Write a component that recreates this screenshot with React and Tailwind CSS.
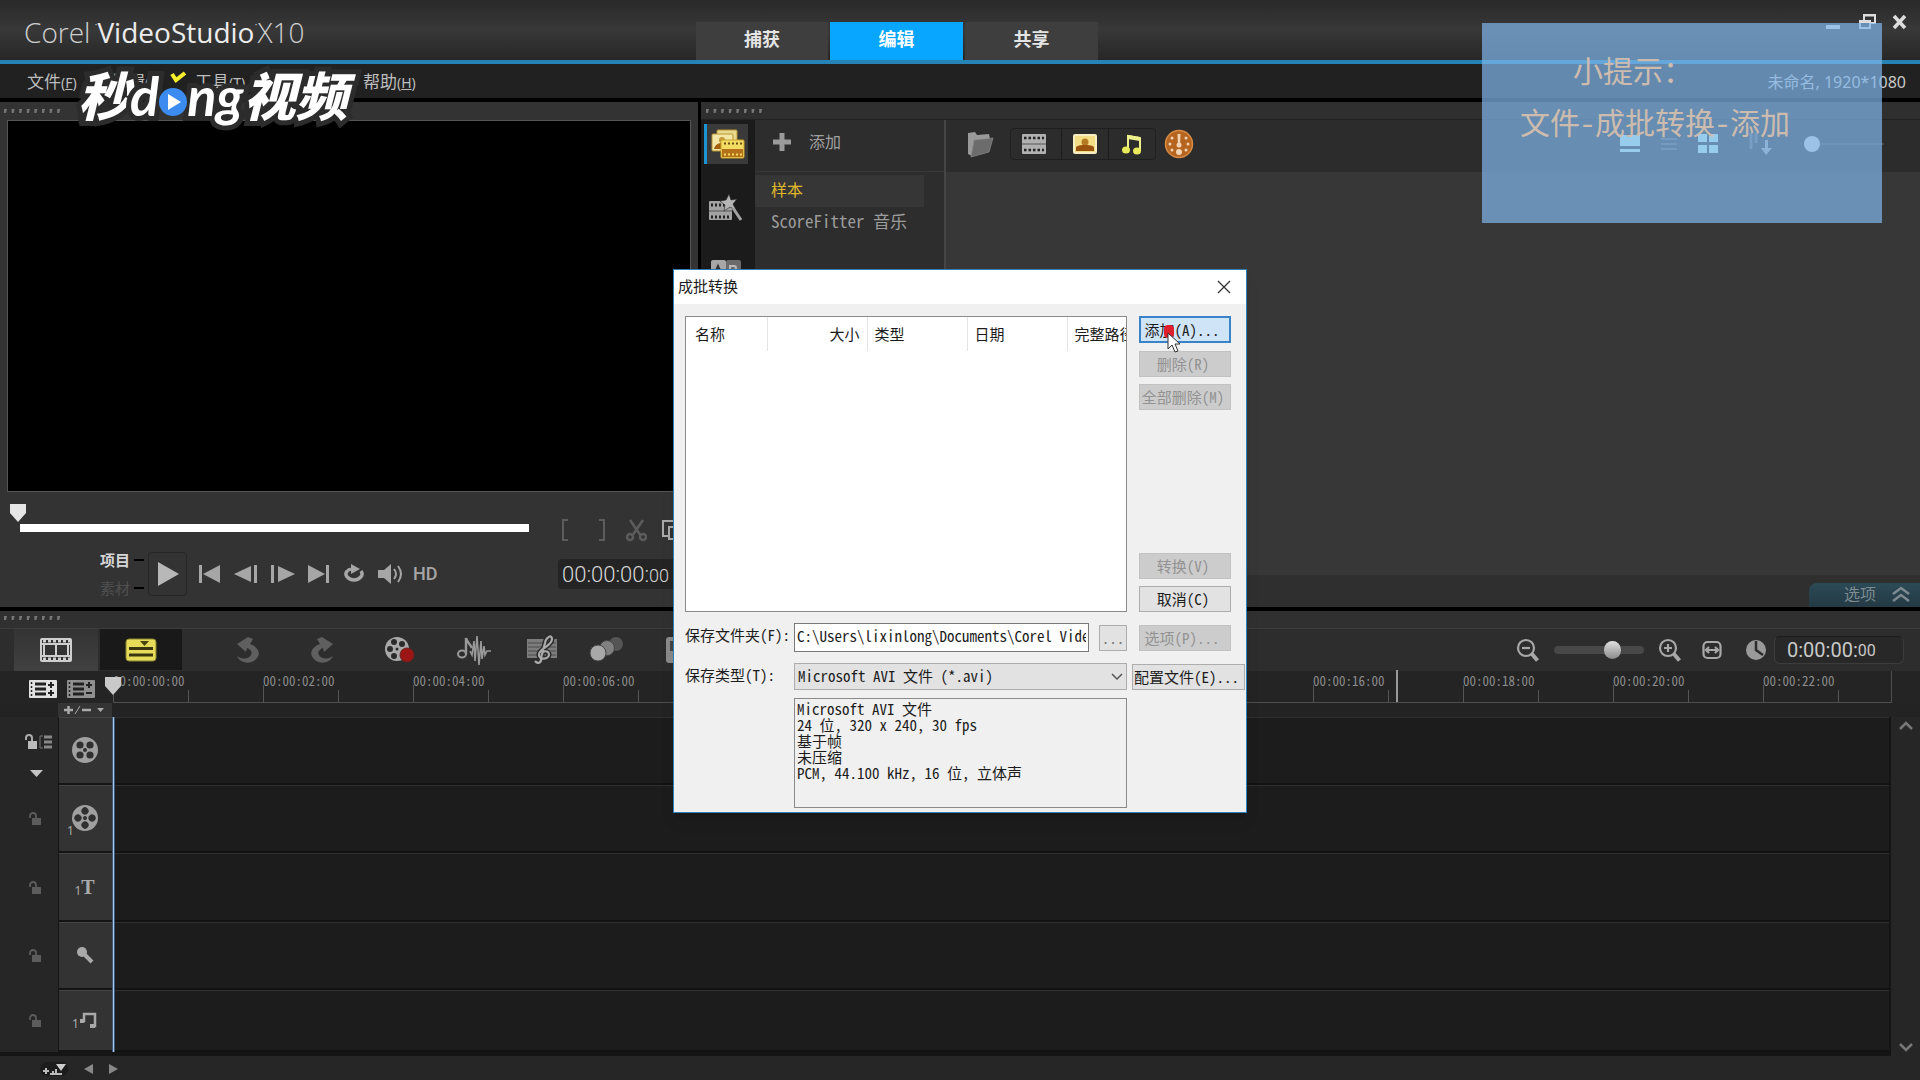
import React from 'react';
import { clsx } from 'clsx';

const SANS = "font-['Noto_Sans','Noto_Sans_CJK_SC',sans-serif]";
const MONO = "font-['Noto_Sans_Mono_CJK_SC','Noto_Sans_CJK_SC',monospace]";

const MENUS = [
  { label: '文件', key: 'F' },
  { label: '编辑', key: 'E' },
  { label: '工具', key: 'T' },
  { label: '设置', key: 'S' },
  { label: '帮助', key: 'H' },
];

const TICKS = ['00', '02', '04', '06', '08', '10', '12', '14', '16', '18', '20', '22'];

/* ---------- icons ---------- */

function Grip({ className }) {
  return (
    <svg className={className} width="60" height="6" viewBox="0 0 60 6">
      {[0, 1, 2, 3, 4, 5, 6, 7].map((i) => (
        <path key={i} d={`M${i * 7.6 + 1} 1h3l-1 4h-2z`} fill="#777" />
      ))}
    </svg>
  );
}

function Reel({ turned }) {
  return (
    <svg width="28" height="28" viewBox="0 0 28 28">
      <circle cx="14" cy="14" r="13" fill="#a0a0a0" />
      <g fill="#303030" transform={turned ? 'rotate(45 14 14)' : undefined}>
        <circle cx="9" cy="9" r="3.6" />
        <circle cx="19" cy="9" r="3.6" />
        <circle cx="9" cy="19" r="3.6" />
        <circle cx="19" cy="19" r="3.6" />
        <circle cx="14" cy="14" r="2" />
      </g>
    </svg>
  );
}

function Lock() {
  return (
    <svg width="14" height="14" viewBox="0 0 14 14">
      <path d="M2 6V4a3 3 0 0 1 6 0v2" fill="none" stroke="#5c5c5c" strokeWidth="1.8" />
      <rect x="4" y="6" width="9" height="7" fill="#5c5c5c" />
    </svg>
  );
}

function MediaIcon() {
  return (
    <svg width="34" height="30" viewBox="0 0 34 30">
      <rect x="6" y="1" width="20" height="15" rx="1" fill="#e9d98c" stroke="#b99432" />
      <rect x="1" y="5" width="21" height="17" rx="1" fill="#f2e7a6" stroke="#b99432" />
      <circle cx="11" cy="11" r="3" fill="#c39736" />
      <path d="M3 20c1-5 5-6 8-6s6 2 8 6z" fill="#a4600f" />
      <rect x="10" y="11" width="23" height="18" rx="1" fill="#f3dc62" stroke="#caa12d" />
      <rect x="11" y="20" width="21" height="8" fill="#b5701a" />
      <path d="M13 14.5h18" stroke="#6c4a10" strokeWidth="2" strokeDasharray="2 2" />
      <path d="M13 25.5h18" stroke="#f3dc62" strokeWidth="2" strokeDasharray="2 2" />
    </svg>
  );
}

function InstantIcon() {
  return (
    <svg width="36" height="30" viewBox="0 0 36 30">
      <rect x="1" y="8" width="23" height="19" rx="1" fill="#a2a2a2" />
      <path d="M3 12h18M3 24h18" stroke="#222" strokeWidth="3" strokeDasharray="2 2" />
      <path d="M1 18h23" stroke="#555" />
      <path d="m21 1 2 6 6-1-4 5 3 6-6-3-6 4 1-6-5-4 6-1z" fill="#b5b5b5" stroke="#222" strokeWidth=".6" />
      <path d="m25 15 8 12" stroke="#a2a2a2" strokeWidth="3" />
    </svg>
  );
}

function TransitionIcon() {
  return (
    <svg width="32" height="26" viewBox="0 0 32 26">
      <rect x="1" y="1" width="15" height="22" rx="2" fill="#a7a7a7" />
      <rect x="16" y="1" width="15" height="22" rx="2" fill="#6b6b6b" />
      <path d="m4 16 4-9 4 9M6 13h4" fill="none" stroke="#333" strokeWidth="2" />
      <path d="M20 16V7h4a2 2 0 0 1 0 4h-4 5a2 2 0 0 1 0 5z" fill="none" stroke="#bbb" strokeWidth="2" />
    </svg>
  );
}

function FolderIcon() {
  return (
    <svg width="28" height="28" viewBox="0 0 28 28">
      <path d="M2 3l7-1 2 3 12-1 1 5-18 17-4-2z" fill="#9a9a9a" />
      <path d="M8 10l19-2-4 14-18 5z" fill="#6c6c6c" stroke="#8c8c8c" strokeWidth=".7" />
    </svg>
  );
}

function FilmIcon() {
  return (
    <svg width="24" height="20" viewBox="0 0 24 20">
      <rect width="24" height="20" rx="1" fill="#b0b0b0" />
      <path d="M2 4h20M2 16h20" stroke="#222" strokeWidth="2.5" strokeDasharray="2.5 2" />
      <path d="M0 10h24" stroke="#555" />
    </svg>
  );
}

function PhotoIcon() {
  return (
    <svg width="24" height="20" viewBox="0 0 24 20">
      <rect x="1" y="1" width="22" height="18" rx="1" fill="#f3dd85" stroke="#f7efc3" strokeWidth="2" />
      <circle cx="12" cy="8" r="3.5" fill="#b67a24" />
      <path d="M3 17v-4c3-2 6-2 9-2s6 0 9 2v4z" fill="#9a520f" />
    </svg>
  );
}

function MusicIcon() {
  return (
    <svg width="22" height="22" viewBox="0 0 22 22">
      <path d="M7 17V3l12 2v13" fill="none" stroke="#eef08a" strokeWidth="2" />
      <path d="M7 4l12 2" stroke="#eef08a" strokeWidth="4" />
      <ellipse cx="5" cy="17" rx="4" ry="3.5" fill="#e9ec5a" />
      <ellipse cx="16" cy="18" rx="4" ry="3.5" fill="#e9ec5a" />
    </svg>
  );
}

function DialIcon() {
  return (
    <svg width="30" height="30" viewBox="0 0 30 30">
      <circle cx="15" cy="15" r="13.5" fill="#b5651f" stroke="#d98a45" strokeWidth="1.5" />
      <g fill="#f2d4b4">
        <circle cx="6" cy="15" r="1.5" />
        <circle cx="24" cy="15" r="1.5" />
        <circle cx="8" cy="9" r="1.5" />
        <circle cx="22" cy="9" r="1.5" />
        <circle cx="8" cy="21" r="1.5" />
        <circle cx="22" cy="21" r="1.5" />
        <path d="M13.5 5h3l-.5 12h-2z" />
        <circle cx="15" cy="16" r="2.5" />
        <circle cx="15" cy="23" r="3" />
      </g>
    </svg>
  );
}

function StoryboardIcon() {
  return (
    <svg width="32" height="24" viewBox="0 0 32 24">
      <rect x="1" y="1" width="30" height="22" rx="1" fill="#333" stroke="#cfcfcf" strokeWidth="2" />
      <path d="M3 3h27M3 21h27" stroke="#cfcfcf" strokeWidth="3" strokeDasharray="3 2" />
      <path d="M2 6h28M2 18h28M16 6v12M4 6v12M28 6v12" stroke="#cfcfcf" strokeWidth="2" />
    </svg>
  );
}

function TimelineIcon() {
  return (
    <svg width="32" height="24" viewBox="0 0 32 24">
      <rect x="1" y="1" width="30" height="22" rx="3" fill="#e6dc5a" stroke="#8c8430" />
      <path d="M15 3h9l-4.5 5z" fill="#4a4410" />
      <path d="M4 10.5h24M4 17h24" stroke="#3a3610" strokeWidth="3" />
    </svg>
  );
}

function Undo({ flip }) {
  return (
    <svg width="26" height="28" viewBox="0 0 26 28" className={clsx(flip && '-scale-x-100')}>
      <path d="M3 8 14 1l5 2-3 5c8 3 11 9 7 14-4 6-16 7-20-2 6 4 12 3 14-1 2-3-1-6-4-7l-1 4z" fill="#5f5f5f" />
    </svg>
  );
}

function RecordIcon() {
  return (
    <svg width="32" height="28" viewBox="0 0 32 28">
      <circle cx="13" cy="13" r="12" fill="#a9a9a9" />
      <g fill="#2b2b2b">
        <circle cx="10" cy="6" r="3" />
        <circle cx="18" cy="8" r="3" />
        <circle cx="6" cy="13" r="3" />
        <circle cx="10" cy="20" r="3" />
        <circle cx="13" cy="13" r="1.5" />
      </g>
      <circle cx="23" cy="19" r="7" fill="#9c1616" stroke="#6a2020" />
    </svg>
  );
}

function WaveIcon() {
  return (
    <svg width="34" height="32" viewBox="0 0 34 32">
      <ellipse cx="5" cy="20" rx="4" ry="3.5" fill="none" stroke="#999" strokeWidth="2" />
      <path d="M9 20V4c1 4 4 6 6 10" fill="none" stroke="#999" strokeWidth="2.4" />
      <path d="M13 17l2 4 2-14 1 20 2-25 2 29 2-24 1 18 2-13 1 9 2-4h4" fill="none" stroke="#999" strokeWidth="1.6" />
    </svg>
  );
}

function ScoreIcon() {
  return (
    <svg width="32" height="32" viewBox="0 0 32 32">
      <rect x="1" y="5" width="30" height="19" fill="#7d7d7d" />
      <path d="M2 9h28M2 13h28M2 17h28M2 21h28" stroke="#4c4c4c" />
      <path
        d="M9 27c3 4 7 1 6-3L19 9c1-6 7-9 7-4 0 7-12 9-13 15-1 6 9 6 10 1 0-5-7-5-7 0"
        fill="none"
        stroke="#2b2b2b"
        strokeWidth="5"
      />
      <path
        d="M9 27c3 4 7 1 6-3L19 9c1-6 7-9 7-4 0 7-12 9-13 15-1 6 9 6 10 1 0-5-7-5-7 0"
        fill="none"
        stroke="#ababab"
        strokeWidth="2.2"
      />
    </svg>
  );
}

function BallsIcon() {
  return (
    <svg width="36" height="28" viewBox="0 0 36 28">
      <circle cx="27" cy="8" r="7" fill="#555" />
      <circle cx="18" cy="12" r="7.5" fill="#808080" stroke="#444" />
      <circle cx="9" cy="17" r="8" fill="#a8a8a8" stroke="#444" />
    </svg>
  );
}

function Zoomer({ plus }) {
  return (
    <svg width="24" height="24" viewBox="0 0 24 24" fill="none" stroke="#a8a8a8">
      <circle cx="10" cy="10" r="8" strokeWidth="2.2" />
      <path d="m15.5 15.5 6 7" strokeWidth="4" />
      <path d={plus ? 'M6 10h8M10 6v8' : 'M6 10h8'} strokeWidth="2.2" />
    </svg>
  );
}

function TrackMode({ color, minus }) {
  return (
    <svg width="28" height="18" viewBox="0 0 28 18">
      <rect width="28" height="18" rx="1" fill={color} />
      <path d="M6 4h11M6 9h11M6 14h11" stroke="#222" strokeWidth="3" />
      <path d="M2.5 2v14" stroke="#222" strokeWidth="1.5" strokeDasharray="2 2" />
      <path d={minus ? 'M19 5h6M22 2v6M19 13h6' : 'M19 5h6M22 2v6M19 13h6M22 10v6'} stroke="#222" strokeWidth="2" />
    </svg>
  );
}

/* ---------- top of the window ---------- */

function Header() {
  return (
    <header className="flex h-16 items-end border-b-4 border-[#2583b5] bg-linear-to-b from-[#292929] via-[#383838] to-[#272727]">
      <h1 className="flex w-[696px] items-start self-center pt-1 pl-6 text-[28px] leading-10 font-light text-[#cfcfcf] font-['Open_Sans',sans-serif]">
        Corel
        <span className="ml-1 text-[8px] leading-6">•</span>
        <span className="font-medium text-[#ececec]">VideoStudio</span>
        <span className="text-[8px] leading-6">•</span>
        X10
      </h1>
      <nav className="flex gap-0.5 text-lg font-bold text-[#e4e4e4]">
        <button className="h-[38px] w-[132px] bg-[#3e3e3e] pb-1">捕获</button>
        <button className="h-[38px] w-[133px] bg-[#08a6ff] pb-1 text-white">编辑</button>
        <button className="h-[38px] w-[133px] bg-[#3e3e3e] pb-1">共享</button>
      </nav>
      <div className="ml-auto flex items-center gap-4 self-start pt-3 pr-3">
        <button aria-label="最小化">
          <svg width="18" height="20" viewBox="0 0 18 20">
            <path d="M2 15h14" stroke="#ddd" strokeWidth="4" />
          </svg>
        </button>
        <button aria-label="还原">
          <svg width="18" height="20" viewBox="0 0 18 20" fill="none" stroke="#ddd" strokeWidth="2">
            <path d="M6 8V3h11v8h-5M6 3.5h11" />
            <path d="M2 9h10v7H2zM2 10h10" />
          </svg>
        </button>
        <button aria-label="关闭">
          <svg width="16" height="20" viewBox="0 0 16 20">
            <path d="m2 4 11 12M13 4 2 16" stroke="#ddd" strokeWidth="3.5" />
          </svg>
        </button>
      </div>
    </header>
  );
}

function MenuBar() {
  return (
    <div className="flex h-[38px] items-center border-b-4 border-black bg-[#212121] pt-0.5 pl-[27px] pr-3.5 text-[17px] text-[#bdbdbd]">
      {MENUS.map((m) => (
        <button key={m.key} className="w-[84px] text-left whitespace-nowrap">
          {m.label}
          <span className="text-sm">
            (<u>{m.key}</u>)
          </span>
        </button>
      ))}
      <span className="ml-auto text-base text-[#c8c8c8]">未命名, 1920*1080</span>
    </div>
  );
}

function Watermark() {
  return (
    <div className="absolute top-[62px] left-[78px] flex items-baseline text-[52px] leading-[64px] font-black text-white italic font-['Noto_Sans_CJK_SC',sans-serif] [paint-order:stroke_fill] [-webkit-text-stroke:10px_#2c2c2c]">
      <span>秒</span>
      <span className="text-[54px] font-bold font-['Lato',sans-serif]">d</span>
      <svg width="28" height="46" viewBox="0 0 28 46" className="relative z-10 overflow-visible">
        <path d="m13 4 4 6 9-7" fill="none" stroke="#f4ee2c" strokeWidth="4" />
        <circle cx="14" cy="32" r="14" fill="#3b8bf0" />
        <path d="M9 24v16l13-8z" fill="#fff" />
      </svg>
      <span className="text-[54px] font-bold font-['Lato',sans-serif]">ng</span>
      <span>视频</span>
    </div>
  );
}

/* ---------- preview ---------- */

function Preview() {
  return (
    <section className="w-[698px] shrink-0 bg-[#333] px-[7px]">
      <Grip className="mt-1.5 -ml-1" />
      <div className="mt-1.5 h-[372px] border border-[#555] bg-black" />
      <div className="flex h-14 items-center">
        <input
          type="range"
          aria-label="播放位置"
          defaultValue="0"
          className="mt-4 ml-[13px] h-2 w-[509px] appearance-none bg-white [&::-webkit-slider-thumb]:-mt-5 [&::-webkit-slider-thumb]:-ml-2.5 [&::-webkit-slider-thumb]:h-[18px] [&::-webkit-slider-thumb]:w-4 [&::-webkit-slider-thumb]:appearance-none [&::-webkit-slider-thumb]:bg-[#e6e6e6] [&::-webkit-slider-thumb]:[clip-path:polygon(0_0,100%_0,100%_50%,50%_100%,0_50%)] [&::-webkit-slider-runnable-track]:h-2"
        />
        <div className="mt-5 ml-8 flex gap-[22px] text-[#5c5c5c]">
          <svg width="8" height="24" viewBox="0 0 8 24" fill="none" stroke="currentColor" strokeWidth="2">
            <path d="M7 2H2v20h5" />
          </svg>
          <svg width="20" height="24" viewBox="0 0 20 24" fill="none" stroke="currentColor" strokeWidth="2">
            <path d="M8 2h5v20H8" />
          </svg>
          <svg width="22" height="24" viewBox="0 0 22 24" fill="none" stroke="currentColor" strokeWidth="2.5" className="-ml-2">
            <path d="M5 2l11 16M18 2 7 18" />
            <circle cx="5" cy="19" r="3" />
            <circle cx="18" cy="19" r="3" />
          </svg>
          <svg width="18" height="24" viewBox="0 0 18 24" fill="none" stroke="#aaa" strokeWidth="2" className="-ml-2">
            <path d="M7 18H2V3h12v4M8 9h10v12H8z" />
          </svg>
        </div>
      </div>
      <div className="flex items-center pl-[93px]">
        <div className="flex w-[42px] flex-col gap-1 text-[15px] leading-6">
          <button className="flex items-center gap-1 font-bold whitespace-nowrap text-[#d6d6d6]">
            项目 <span className="h-0.5 w-2.5 shrink-0 bg-black" />
          </button>
          <button className="flex items-center gap-1 whitespace-nowrap text-[#505050]">
            素材 <span className="h-0.5 w-2.5 shrink-0 bg-black" />
          </button>
        </div>
        <button aria-label="播放" className="ml-1.5 flex h-11 w-[39px] items-center justify-center rounded border border-[#262626]">
          <svg width="22" height="24" viewBox="0 0 22 24">
            <path d="M1 0v24l21-12z" fill="#b8b8b8" />
          </svg>
        </button>
        <div className="ml-3 flex items-center gap-[13px] text-[#a6a6a6]">
          <svg width="22" height="18" viewBox="0 0 22 18" fill="currentColor">
            <path d="M0 0h3v18H0zM21 0v18L4 9z" />
          </svg>
          <svg width="24" height="18" viewBox="0 0 24 18" fill="currentColor">
            <path d="M17 1v16L0 9zM20 0h3v18h-3z" />
          </svg>
          <svg width="24" height="18" viewBox="0 0 24 18" fill="currentColor">
            <path d="M7 1v16l17-8zM0 0h3v18H0z" />
          </svg>
          <svg width="22" height="18" viewBox="0 0 22 18" fill="currentColor">
            <path d="M18 0h3v18h-3zM0 0v18l17-9z" />
          </svg>
          <svg width="22" height="20" viewBox="0 0 22 20">
            <path d="M4 7a8 6 0 1 0 14 0" fill="none" stroke="currentColor" strokeWidth="3.5" />
            <path d="M8 0v10l9-5z" fill="currentColor" />
            <path d="M4 8c1-3 3-3 6-3" fill="none" stroke="currentColor" strokeWidth="3" />
          </svg>
          <svg width="26" height="20" viewBox="0 0 26 20">
            <path d="M0 6h6l7-6v20l-7-6H0z" fill="currentColor" />
            <path d="M16 5q4 5 0 10M20 2q6 8 0 16" fill="none" stroke="currentColor" strokeWidth="2" />
          </svg>
          <button className="-ml-1 text-lg leading-5 font-medium font-['Roboto',sans-serif]">HD</button>
        </div>
        <div className="ml-auto flex h-[30px] w-[133px] items-center rounded bg-[#242424] pl-1 text-[22px] font-light text-[#d8d8d8] font-['Roboto',sans-serif]">
          00:00:00:<span className="pt-1 text-lg">00</span>
          <svg width="14" height="20" viewBox="0 0 14 20" className="ml-1">
            <path d="M0 7l6-6 6 6zM0 12l6 6 6-6z" fill="#ddd" />
          </svg>
        </div>
      </div>
    </section>
  );
}

/* ---------- library ---------- */

function Library() {
  return (
    <section className="flex min-w-0 flex-1 flex-col bg-[#2f2f2f]">
      <div className="h-[18px] border-b border-[#222] pt-1.5 pl-1">
        <Grip />
      </div>
      <div className="flex min-h-0 flex-1">
        <div className="flex w-[54px] flex-col items-center gap-6 overflow-hidden bg-[#1b1b1b] pt-1 pr-1">
          <button aria-label="媒体" className="flex h-10 w-11 shrink-0 items-center justify-center border-l-3 border-[#1c94d2] bg-[#3a3a3a]">
            <MediaIcon />
          </button>
          <button aria-label="即时项目" className="flex h-10 shrink-0 items-center">
            <InstantIcon />
          </button>
          <button aria-label="转场" className="flex h-10 shrink-0 items-center">
            <TransitionIcon />
          </button>
        </div>
        <div className="w-[191px] border-r-2 border-[#454545] bg-[#2d2d2d]">
          <button className="flex h-[52px] w-full items-center gap-[18px] border-b border-[#383838] pb-2 pl-[18px] text-base text-[#a0a0a0]">
            <svg width="18" height="20" viewBox="0 0 18 20">
              <path d="M9 1v18M0 10h18" stroke="#9a9a9a" strokeWidth="5" />
            </svg>
            添加
          </button>
          <ul className={clsx('pt-[3px] text-[17px] text-[#9c9c9c]', MONO)}>
            <li className="mr-5 flex h-8 items-center bg-[#363636] pb-1 pl-4 text-base text-[#e0b92c]">样本</li>
            <li className="flex h-8 items-center pb-1 pl-4 whitespace-nowrap">ScoreFitter 音乐</li>
          </ul>
        </div>
        <div className="flex min-w-0 flex-1 flex-col bg-[#373737]">
          <div className="flex h-[52px] items-center bg-[#2c2c2c] pb-1 pl-5">
            <button aria-label="导入媒体文件">
              <FolderIcon />
            </button>
            <div className="ml-4 flex h-8 w-[146px] divide-x divide-[#1d1d1d] rounded border border-[#1f1f1f]">
              <button aria-label="视频" className="flex flex-1 items-center justify-center pr-1">
                <FilmIcon />
              </button>
              <button aria-label="照片" className="flex flex-1 items-center justify-center">
                <PhotoIcon />
              </button>
              <button aria-label="音频" className="flex flex-1 items-center justify-center">
                <MusicIcon />
              </button>
            </div>
            <button aria-label="显示速度" className="ml-2">
              <DialIcon />
            </button>
            <div className="mr-9 ml-auto flex items-center gap-5">
              <svg width="20" height="18" viewBox="0 0 20 18">
                <path d="M0 0h20v11H0zM0 14h20v3H0z" fill="#cfe" />
              </svg>
              <svg width="18" height="16" viewBox="0 0 18 16">
                <path d="M1 3h16M1 8h16M1 13h16" stroke="#5c5c5c" strokeWidth="2" />
              </svg>
              <svg width="20" height="20" viewBox="0 0 20 20">
                <path d="M0 0h9v8H0zM11 0h9v8h-9zM0 11h9v8H0zM11 11h9v8h-9z" fill="#cfe" />
              </svg>
              <svg width="30" height="24" viewBox="0 0 30 24" className="ml-2">
                <path d="M5 1v16M10 1v10" stroke="#666" strokeWidth="3" />
                <path d="M19 8h3v8h4l-6 7-5-7h4z" fill="#aaa" />
              </svg>
              <input
                type="range"
                aria-label="缩略图大小"
                defaultValue="0"
                className="ml-2 h-0.5 w-20 appearance-none bg-[#484848] [&::-webkit-slider-thumb]:h-4 [&::-webkit-slider-thumb]:w-4 [&::-webkit-slider-thumb]:appearance-none [&::-webkit-slider-thumb]:rounded-full [&::-webkit-slider-thumb]:bg-[#ddd]"
              />
            </div>
          </div>
          <div className="mt-auto flex h-8 items-end justify-end bg-[#2f2f2f]">
            <button className="flex h-6 w-[111px] items-center justify-end gap-4 rounded-tl-lg bg-linear-to-b from-[#2c4a57] to-[#243a44] pr-2.5 pb-0.5 text-base leading-5 text-[#7d8a90]">
              选项
              <svg width="18" height="16" viewBox="0 0 18 16" fill="none" stroke="currentColor" strokeWidth="2.5">
                <path d="m1 8 8-6 8 6M1 15l8-6 8 6" />
              </svg>
            </button>
          </div>
        </div>
      </div>
    </section>
  );
}

/* ---------- timeline ---------- */

function TimelineToolbar() {
  return (
    <div className="flex h-[43px] items-center border-t border-[#3d3d3d] bg-[#2d2d2d] pl-3.5 pr-4">
      <button aria-label="故事板视图" className="flex h-full w-[84px] items-center justify-center bg-linear-to-b from-[#333] to-[#414141]">
        <StoryboardIcon />
      </button>
      <button aria-label="时间轴视图" className="ml-0.5 flex h-[41px] w-[82px] items-center justify-center self-start bg-[#191919]">
        <TimelineIcon />
      </button>
      <div className="ml-[52px] flex items-center">
        <button aria-label="撤消" className="w-[76px]"><Undo /></button>
        <button aria-label="重复" className="w-[74px]"><Undo flip /></button>
        <button aria-label="录制/捕获选项" className="w-[73px]"><RecordIcon /></button>
        <button aria-label="混音器" className="w-[69px]"><WaveIcon /></button>
        <button aria-label="自动音乐" className="w-[63px]"><ScoreIcon /></button>
        <button aria-label="运动追踪" className="w-[75px]"><BallsIcon /></button>
        <svg width="24" height="28" viewBox="0 0 24 28">
          <rect x="2" y="1" width="20" height="26" rx="3" fill="#8a8a8a" />
          <rect x="6" y="5" width="12" height="10" fill="#444" />
        </svg>
      </div>
      <div className="ml-auto flex items-center">
        <button aria-label="缩小"><Zoomer /></button>
        <input
          type="range"
          aria-label="缩放时间轴"
          defaultValue="68"
          className="mx-3.5 h-2 w-[90px] appearance-none rounded bg-[#484848] [&::-webkit-slider-thumb]:h-[18px] [&::-webkit-slider-thumb]:w-[17px] [&::-webkit-slider-thumb]:appearance-none [&::-webkit-slider-thumb]:rounded-full [&::-webkit-slider-thumb]:bg-linear-to-b [&::-webkit-slider-thumb]:from-[#e2e2e2] [&::-webkit-slider-thumb]:to-[#8a8a8a]"
        />
        <button aria-label="放大"><Zoomer plus /></button>
        <svg width="20" height="20" viewBox="0 0 20 20" fill="none" stroke="#a8a8a8" strokeWidth="2.2" className="ml-5">
          <rect x="1.5" y="2" width="17" height="16" rx="4" />
          <path d="M4 10h12M7 7l-3 3 3 3M13 7l3 3-3 3" />
        </svg>
        <svg width="20" height="22" viewBox="0 0 20 22" className="ml-6">
          <circle cx="10" cy="11" r="10" fill="#9a9a9a" />
          <path d="M10 2v9l7 5" fill="none" stroke="#2d2d2d" strokeWidth="2.5" />
        </svg>
        <div className="ml-2 flex h-7 w-[130px] items-center rounded-md border border-[#3c3c3c] border-t-[#1d1d1d] bg-[#282828] pl-3 text-xl text-[#c8c8c8] font-['Roboto',sans-serif]">
          0:00:00:<span className="pt-0.5 text-base">00</span>
        </div>
      </div>
    </div>
  );
}

function Ruler() {
  return (
    <div className="flex h-8 bg-[#242424]">
      <div className="flex w-[113px] shrink-0 items-center gap-2.5 pt-1 pl-[29px]">
        <button aria-label="显示全部可视化轨道"><TrackMode color="#e2e2e2" /></button>
        <button aria-label="轨道管理器"><TrackMode color="#8f8f8f" minus /></button>
      </div>
      <div className="relative mr-7 flex min-w-0 flex-1 border-r border-b border-[#4f4f4f]">
        <div className="flex min-w-0 flex-1 overflow-hidden">
          {TICKS.map((t) => (
            <div key={t} className="flex w-[150px] shrink-0 items-end">
              <div className="relative h-full w-[75px]">
                <span className={clsx('block text-[13px] leading-5 whitespace-nowrap text-[#8c8c8c]', MONO)}>00:00:{t}:00</span>
                <span className="absolute bottom-0 left-0 h-[17px] w-px bg-[#555]" />
              </div>
              <span className="h-3 w-px bg-[#555]" />
            </div>
          ))}
        </div>
        <span className="absolute bottom-0 left-[1283px] h-8 w-0.5 bg-[#999]" />
        <svg width="16" height="18" viewBox="0 0 16 18" className="absolute top-1.5 -left-2">
          <path d="M0 0h16v9l-8 9-8-9z" fill="#c9c9c9" />
        </svg>
      </div>
    </div>
  );
}

function Track({ tool, children, extra, last }) {
  return (
    <div className={clsx('flex min-h-0', last ? 'flex-10' : 'flex-11')}>
      <div className="flex w-[58px] flex-col items-center justify-center bg-[#262626] pl-3">{tool}</div>
      <div className="relative flex w-[54px] items-center justify-center border-b-2 border-l border-[#151515] bg-[#333] pr-0.5 shadow-[inset_0_1px_0_#454545]">
        {children}
        {extra && <span className="absolute bottom-3 left-2 text-xs leading-4 text-[#aaa]">1</span>}
      </div>
      <div className="flex-1 border-b-2 border-[#121212] bg-[#1c1c1c] shadow-[inset_0_1px_0_#303030]" />
    </div>
  );
}

function Timeline() {
  return (
    <section className="flex min-h-0 flex-1 flex-col border-t-4 border-black bg-[#262626]">
      <div className="h-[17px] bg-[#303030] pt-1 pl-[3px]">
        <Grip />
      </div>
      <TimelineToolbar />
      <Ruler />
      <div className="flex h-3.5 bg-[#232323] pl-[58px]">
        <button aria-label="添加/删除章节点" className="flex w-[54px] items-center justify-center bg-[#343434]">
          <svg width="42" height="10" viewBox="0 0 42 10" stroke="#aaa" strokeWidth="2.5" fill="#aaa">
            <path d="M0 5h9M4.5 1v8M18 5h9" />
            <path d="m11 9 5-8" strokeWidth="1" />
            <path d="M33 3h7l-3.5 4z" stroke="none" />
          </svg>
        </button>
      </div>
      <div className="flex min-h-0 flex-1">
        <div className="relative flex min-w-0 flex-1 flex-col border-r-2 border-b-4 border-[#151515]">
          <Track
            tool={
              <svg width="30" height="46" viewBox="0 0 30 46" className="mt-3 ml-2">
                <path d="M2 6V4a3 3 0 0 1 6 0v3" fill="none" stroke="#aaa" strokeWidth="2" />
                <path d="M4 7h9v8H4z" fill="#bbb" />
                <path d="M20 3h8M20 8h8M20 13h8" stroke="#888" strokeWidth="3" />
                <path d="M19 2h-3v12h3" fill="none" stroke="#777" />
                <path d="M6 36h13l-6.500 7z" fill="#c4c4c4" />
              </svg>
            }
          >
            <Reel />
          </Track>
          <Track tool={<Lock />} extra>
            <Reel turned />
          </Track>
          <Track tool={<Lock />}>
            <span className="pt-2 text-xs text-[#aaa]">1</span>
            <span className="text-xl font-bold text-[#aaa] font-['Liberation_Serif',serif]">T</span>
          </Track>
          <Track tool={<Lock />}>
            <svg width="18" height="18" viewBox="0 0 18 18">
              <circle cx="6" cy="6" r="5" fill="#a9a9a9" />
              <path d="m9 9 7 7" stroke="#a9a9a9" strokeWidth="4" />
            </svg>
          </Track>
          <Track tool={<Lock />} last>
            <span className="pt-2 text-xs text-[#aaa]">1</span>
            <svg width="18" height="18" viewBox="0 0 18 18" fill="none" stroke="#a9a9a9" strokeWidth="2.5">
              <path d="M1 10h4V3h11v12h-4" />
              <path d="M1 10h4M11 15h5" strokeWidth="4" />
            </svg>
          </Track>
          <span className="absolute inset-y-0 left-[112px] w-[3px] border-x border-[#3d5878] bg-[#a9c4e4]" />
        </div>
        <div className="flex w-[29px] flex-col items-center justify-between py-1 text-[#777]">
          <svg width="14" height="10" viewBox="0 0 14 10" fill="none" stroke="currentColor" strokeWidth="2.5">
            <path d="m1 8 6-6 6 6" />
          </svg>
          <svg width="14" height="10" viewBox="0 0 14 10" fill="none" stroke="currentColor" strokeWidth="2.5">
            <path d="m1 2 6 6 6-6" />
          </svg>
        </div>
      </div>
      <div className="flex h-6 items-center pt-0.5 pl-10">
        <svg width="28" height="14" viewBox="0 0 28 14">
          <rect width="28" height="14" rx="7" fill="#1c1c1c" />
          <path d="M3 9h6M6 6v6M10 12h12M13 9v3M16 7v5" stroke="#bbb" strokeWidth="2" />
          <path d="M16 2h10l-5 7z" fill="#ccc" />
        </svg>
        <button aria-label="向左滚动" className="ml-4">
          <svg width="9" height="10" viewBox="0 0 9 10"><path d="M9 0v10L0 5z" fill="#888" /></svg>
        </button>
        <button aria-label="向右滚动" className="ml-4">
          <svg width="9" height="10" viewBox="0 0 9 10"><path d="M0 0v10l9-5z" fill="#888" /></svg>
        </button>
      </div>
    </section>
  );
}

/* ---------- overlays ---------- */

function TipBox() {
  return (
    <aside className={clsx('absolute top-[23px] right-[38px] h-[200px] w-[400px] bg-[#80b6eb]/70 pt-7 text-[30px] leading-9 font-medium text-[#cdbcae]', MONO)}>
      <p className="pl-[91px]">小提示：</p>
      <p className="mt-4 pl-[38px] whitespace-nowrap">文件-成批转换-添加</p>
    </aside>
  );
}

function DialogButton({ children, className, disabled }) {
  return (
    <button
      disabled={disabled}
      className={clsx(
        'h-[26px] border text-center leading-[22px] whitespace-nowrap',
        disabled ? 'border-[#c2c2c2] bg-[#cccccc] text-[#929292]' : 'border-[#adadad] bg-[#e2e2e2]',
        className
      )}
    >
      {children}
    </button>
  );
}

function BatchDialog() {
  return (
    <div
      role="dialog"
      aria-labelledby="batch-title"
      className={clsx('absolute top-[269px] left-[673px] w-[574px] border border-[#2f7fb8] bg-[#f0f0f0] pb-1 text-[15px] text-[#1c1c1c] shadow-lg', MONO)}
    >
      <div className="flex h-[34px] items-center justify-between bg-white pr-[15px] pl-1">
        <h2 id="batch-title" className="pb-0.5">成批转换</h2>
        <button aria-label="关闭">
          <svg width="14" height="14" viewBox="0 0 14 14">
            <path d="m1 1 12 12M13 1 1 13" stroke="#333" strokeWidth="1.3" />
          </svg>
        </button>
      </div>

      <div className="flex pt-3 pl-[11px]">
        <div className="h-[296px] w-[442px] overflow-hidden border border-[#8a8a8a] bg-white">
          <table className="w-[470px] table-fixed">
            <thead>
              <tr className="h-[34px] divide-x divide-[#e4e4e4] text-left">
                <th className="w-[81px] pl-[9px] font-normal">名称</th>
                <th className="w-[100px] pr-[7px] text-right font-normal">大小</th>
                <th className="w-[100px] pl-[7px] font-normal">类型</th>
                <th className="w-[100px] pl-[7px] font-normal">日期</th>
                <th className="pl-[7px] font-normal whitespace-nowrap">完整路径</th>
              </tr>
            </thead>
          </table>
        </div>
        <div className="ml-3 flex w-[92px] flex-col">
          <button className="h-[27px] border-2 border-[#3a83c6] bg-[#cfe4f7] pr-1.5 leading-5 whitespace-nowrap">添加(A)...</button>
          <DialogButton disabled className="mt-2 pr-1">删除(R)</DialogButton>
          <DialogButton disabled className="mt-[7px] pr-1">全部删除(M)</DialogButton>
          <DialogButton disabled className="mt-auto pr-1">转换(V)</DialogButton>
          <DialogButton className="mt-[7px] pr-1">取消(C)</DialogButton>
        </div>
      </div>

      <div className="flex items-center pt-[11px] pl-[11px]">
        <label htmlFor="folder" className="w-[109px] pb-1 whitespace-nowrap">保存文件夹(F):</label>
        <input
          id="folder"
          defaultValue="C:\Users\lixinlong\Documents\Corel VideoStudio"
          className="h-[29px] w-[295px] border border-[#7a7a7a] bg-white px-0.5 pb-1"
        />
        <DialogButton className="ml-2.5 w-7 text-[#777]">...</DialogButton>
        <DialogButton disabled className="ml-3 w-[92px] pr-1.5">选项(P)...</DialogButton>
      </div>

      <div className="flex items-center pt-[11px] pl-[11px]">
        <label htmlFor="type" className="w-[109px] pb-0.5 whitespace-nowrap">保存类型(T):</label>
        <div className="relative">
          <select id="type" className="block h-[27px] w-[333px] appearance-none border border-[#adadad] bg-[#e2e2e2] pl-[3px]">
            <option>Microsoft AVI 文件 (*.avi)</option>
          </select>
          <svg width="12" height="8" viewBox="0 0 12 8" className="pointer-events-none absolute top-2.5 right-1">
            <path d="m1 1 5 5 5-5" fill="none" stroke="#555" strokeWidth="1.5" />
          </svg>
        </div>
        <DialogButton className="ml-[5px] w-[113px] pr-1">配置文件(E)...</DialogButton>
      </div>

      <textarea
        readOnly
        aria-label="格式信息"
        className="mt-2 ml-[120px] block h-[110px] w-[333px] resize-none overflow-hidden border border-[#8a8a8a] bg-[#f0f0f0] px-0.5 pt-0.5 leading-4"
        value={'Microsoft AVI 文件\n24 位, 320 x 240, 30 fps\n基于帧\n未压缩\nPCM, 44.100 kHz, 16 位, 立体声'}
      />

      <svg width="24" height="32" viewBox="0 0 24 32" className="pointer-events-none absolute top-[52px] left-[487px]">
        <rect x="3" y="3" width="10" height="13" rx="4" fill="#e01f2d" />
        <path d="M7 11v16l4-4 3 7 3-1-3-7h5z" fill="#fff" stroke="#333" strokeWidth="1" />
      </svg>
    </div>
  );
}

export default function App() {
  return (
    <div className={clsx('relative flex h-screen min-h-[900px] flex-col overflow-hidden bg-black', SANS)}>
      <Header />
      <MenuBar />
      <main className="flex h-[505px] shrink-0 gap-[3px]">
        <Preview />
        <Library />
      </main>
      <Timeline />
      <Watermark />
      <BatchDialog />
      <TipBox />
    </div>
  );
}
